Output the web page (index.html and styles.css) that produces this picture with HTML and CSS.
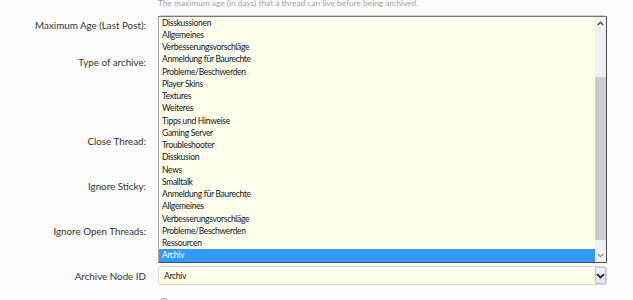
FILE: index.html
```html
<!DOCTYPE html>
<html lang="de">
<head>
<meta charset="utf-8">
<title>Thread Archive Options</title>
<link rel="stylesheet" href="styles.css">
</head>
<body>
<form class="form">
  <div class="row r-explain">
    <div class="lbl"></div>
    <div class="ctl"><p class="explain">The maximum age (in days) that a thread can live before being archived.</p></div>
  </div>
  <div class="row r-age">
    <div class="lbl">Maximum Age (Last Post):</div>
    <div class="ctl"><div class="textbox"></div></div>
  </div>
  <div class="row r-type">
    <div class="lbl">Type of archive:</div>
    <div class="ctl"></div>
  </div>
  <div class="row r-close">
    <div class="lbl">Close Thread:</div>
    <div class="ctl"></div>
  </div>
  <div class="row r-sticky">
    <div class="lbl">Ignore Sticky:</div>
    <div class="ctl"></div>
  </div>
  <div class="row r-open">
    <div class="lbl">Ignore Open Threads:</div>
    <div class="ctl"></div>
  </div>
  <div class="row r-node">
    <div class="lbl">Archive Node ID</div>
    <div class="ctl">
      <div class="select">
        <span class="select-val">Archiv</span>
        <span class="select-btn">
          <svg width="9" height="6" viewBox="0 0 9 6"><path d="M1 1.2 L4.5 4.5 L8 1.2" fill="none" stroke="#1c2740" stroke-width="1.8"/></svg>
        </span>
      </div>
    </div>
  </div>
  <div class="row r-roll">
    <div class="lbl">Rollover:</div>
    <div class="ctl"><span class="radio"></span></div>
  </div>

  <div class="popup">
    <ul class="options">
      <li>Disskussionen</li>
      <li>Allgemeines</li>
      <li>Verbesserungsvorschläge</li>
      <li>Anmeldung für Baurechte</li>
      <li>Probleme/Beschwerden</li>
      <li>Player Skins</li>
      <li>Textures</li>
      <li>Weiteres</li>
      <li>Tipps und Hinweise</li>
      <li>Gaming Server</li>
      <li>Troubleshooter</li>
      <li>Disskusion</li>
      <li>News</li>
      <li>Smalltalk</li>
      <li>Anmeldung für Baurechte</li>
      <li>Allgemeines</li>
      <li>Verbesserungsvorschläge</li>
      <li>Probleme/Beschwerden</li>
      <li>Ressourcen</li>
      <li class="selected">Archiv</li>
    </ul>
    <div class="scrollbar">
      <div class="sb-btn">
        <svg width="7" height="5" viewBox="0 0 7 5"><path d="M0.8 4 L3.5 1.3 L6.2 4" fill="none" stroke="#4a4a4a" stroke-width="1.4"/></svg>
      </div>
      <div class="sb-track"><div class="sb-thumb"></div></div>
      <div class="sb-btn">
        <svg width="7" height="5" viewBox="0 0 7 5"><path d="M0.8 1 L3.5 3.7 L6.2 1" fill="none" stroke="#8a8a8a" stroke-width="1.1"/></svg>
      </div>
    </div>
  </div>
</form>
</body>
</html>
```
FILE: styles.css
```css
html, body {
  margin: 0;
  padding: 0;
  background: #fbfbfc;
  overflow: hidden;
}

.form {
  position: relative;
  width: 607px;
  font-family: Lato, "Open Sans", sans-serif;
}

.row {
  display: flex;
  column-gap: 12px;
}

.lbl {
  flex: none;
  width: 146px;
  text-align: right;
  font-size: 9.8px;
  line-height: 20px;
  color: #333;
  white-space: nowrap;
}

.ctl {
  flex: none;
  width: 449px;
}

.r-explain { margin-top: -3.5px; height: 18.5px; }
.r-age { height: 37px; }
.r-type { height: 79px; }
.r-close { height: 45px; }
.r-sticky { height: 45px; }
.r-open { height: 45px; }
.r-node { height: 27px; }
.r-roll { height: 30px; }

.explain {
  margin: 0;
  font-size: 8.35px;
  line-height: 12px;
  color: #a2a2a2;
  white-space: nowrap;
}

.textbox {
  height: 20px;
  box-sizing: border-box;
  border: 1px solid #cfcfcf;
  border-radius: 4px;
  background: #fff;
}

.select {
  position: relative;
  height: 19px;
  box-sizing: border-box;
  border: 1px solid #d6d6d6;
  border-radius: 3px;
  background: linear-gradient(#fffff8, #ffffe2);
  display: flex;
  align-items: center;
}

.select-val {
  padding-left: 5px;
  font-size: 8.5px;
  letter-spacing: -0.3px;
  color: #111;
  flex: 1;
}

.select-btn {
  width: 11px;
  height: 17px;
  box-sizing: border-box;
  border: 1px solid #b9c7d8;
  background: linear-gradient(#eef3f9, #dbe4ef);
  display: flex;
  align-items: center;
  justify-content: center;
}

.radio {
  display: block;
  margin: 5px 0 0 1px;
  width: 10px;
  height: 10px;
  box-sizing: border-box;
  border: 1px solid #9a9a9a;
  border-radius: 50%;
  background: #fff;
}

.popup {
  position: absolute;
  top: 19px;
  left: 158px;
  width: 449px;
  height: 247px;
  box-sizing: border-box;
  border: 1px solid #4a4a4a;
  border-top-color: #7a7a7a;
  border-left-color: #a8a8a8;
  background: #fffff0;
  display: flex;
}

.options {
  flex: 1;
  margin: 0;
  padding: 0;
  list-style: none;
}

.options li {
  height: 12.25px;
  line-height: 12.25px;
  padding-left: 3px;
  font-size: 8.5px;
  letter-spacing: -0.3px;
  color: #111;
  white-space: nowrap;
}

.options li.selected {
  background: #3399ff;
  color: #fff;
}

.scrollbar {
  flex: none;
  width: 11px;
  display: flex;
  flex-direction: column;
  background: #f0f0f0;
}

.sb-btn {
  height: 13px;
  display: flex;
  align-items: center;
  justify-content: center;
}

.sb-track {
  flex: 1;
  padding-top: 47px;
  padding-bottom: 9px;
  display: flex;
  flex-direction: column;
}

.sb-thumb {
  flex: 1;
  background: #cdcdcd;
}
```
